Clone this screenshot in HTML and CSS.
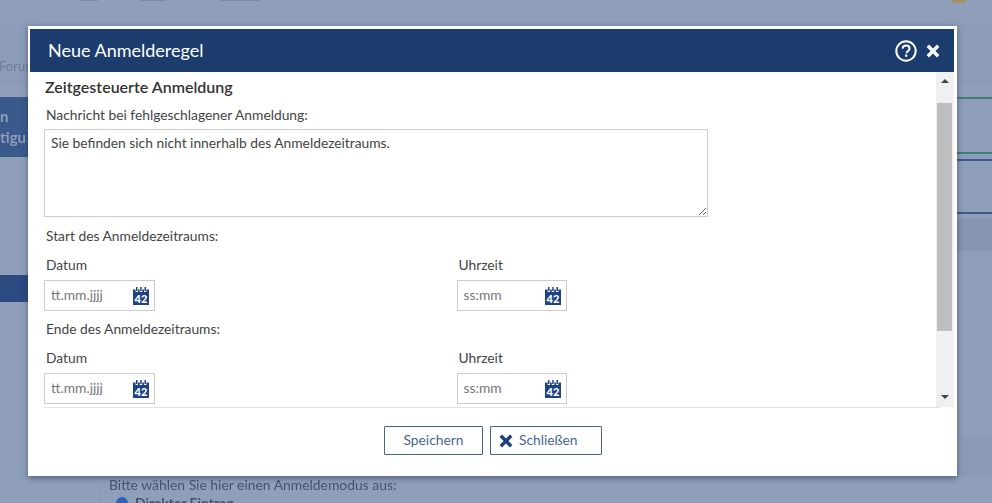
FILE: index.html
```html
<!DOCTYPE html>
<html lang="de">
<head>
<meta charset="utf-8">
<title>Neue Anmelderegel</title>
<link rel="stylesheet" href="styles.css">
</head>
<body>
<div class="page">
  <div class="top"><span class="mark"></span><span class="mark wide"></span><span class="mark short"></span><span class="gold"></span></div>
  <div class="nav"><span class="forum">Forum</span></div>
  <div class="main">
    <div class="side">
      <div class="block"><span>n</span><span>tigu</span></div>
      <div class="block small"></div>
    </div>
    <div class="content">
      <div class="lines">
        <div class="line green"></div>
        <div class="line green g2"></div>
        <div class="line blue b1"></div>
        <div class="line blue b2"></div>
        <div class="band"></div>
      </div>
      <div class="lower">
        <div class="lowerband"></div>
        <p class="mode">Bitte wählen Sie hier einen Anmeldemodus aus:</p>
        <p class="radio"><span class="dot"></span>Direkter Eintrag</p>
      </div>
    </div>
  </div>
</div>

<div class="modal">
  <header class="head">
    <h1>Neue Anmelderegel</h1>
    <div class="head-icons">
      <svg class="help" width="22" height="22" viewBox="0 0 22 22" aria-hidden="true"><circle cx="11" cy="11" r="9.700" fill="none" stroke="#fff" stroke-width="2"/><path d="M7.600 8.600c.2-2 1.600-3 3.500-3 2 0 3.400 1.200 3.400 2.900 0 1.400-.8 2.100-1.800 2.800-.8.500-1.100.9-1.100 1.900" fill="none" stroke="#fff" stroke-width="2"/><rect x="10.100" y="14.500" width="2.200" height="2.300" fill="#fff"/></svg>
      <svg width="14" height="14" viewBox="0 0 14 14" aria-hidden="true"><path d="M3 .6 7 4.600l4-4L13.400 3l-4 4 4 4-2.400 2.400-4-4-4 4L.6 11l4-4-4-4z" fill="#fff"/></svg>
    </div>
  </header>
  <div class="scrollwrap">
    <div class="body">
      <h2>Zeitgesteuerte Anmeldung</h2>
      <label class="lab msg">Nachricht bei fehlgeschlagener Anmeldung:</label>
      <textarea class="area">Sie befinden sich nicht innerhalb des Anmeldezeitraums.</textarea>
      <p class="lab sect first">Start des Anmeldezeitraums:</p>
      <div class="row">
        <div class="col">
          <label class="lab">Datum</label>
          <div class="field"><input placeholder="tt.mm.jjjj">
            <svg class="cal" width="16" height="18" viewBox="0 0 16 18" aria-hidden="true"><path d="M0 2.500h2.600v2.500h2.400V2.500h1.700v2.500h2.600V2.500h1.700v2.500h2.400V2.500H16V18H0z" fill="#1f4285"/><path d="M3 0h1.500v4H3zM7.200 0h1.500v4H7.200zM11.500 0H13v4h-1.500z" fill="#1f4285"/><text x="8" y="16" class="caltext">42</text></svg>
          </div>
        </div>
        <div class="col">
          <label class="lab">Uhrzeit</label>
          <div class="field"><input placeholder="ss:mm">
            <svg class="cal" width="16" height="18" viewBox="0 0 16 18" aria-hidden="true"><path d="M0 2.500h2.600v2.500h2.400V2.500h1.700v2.500h2.600V2.500h1.700v2.500h2.400V2.500H16V18H0z" fill="#1f4285"/><path d="M3 0h1.500v4H3zM7.200 0h1.500v4H7.200zM11.500 0H13v4h-1.500z" fill="#1f4285"/><text x="8" y="16" class="caltext">42</text></svg>
          </div>
        </div>
      </div>
      <p class="lab sect">Ende des Anmeldezeitraums:</p>
      <div class="row">
        <div class="col">
          <label class="lab">Datum</label>
          <div class="field"><input placeholder="tt.mm.jjjj">
            <svg class="cal" width="16" height="18" viewBox="0 0 16 18" aria-hidden="true"><path d="M0 2.500h2.600v2.500h2.400V2.500h1.700v2.500h2.600V2.500h1.700v2.500h2.400V2.500H16V18H0z" fill="#1f4285"/><path d="M3 0h1.500v4H3zM7.200 0h1.500v4H7.200zM11.500 0H13v4h-1.500z" fill="#1f4285"/><text x="8" y="16" class="caltext">42</text></svg>
          </div>
        </div>
        <div class="col">
          <label class="lab">Uhrzeit</label>
          <div class="field"><input placeholder="ss:mm">
            <svg class="cal" width="16" height="18" viewBox="0 0 16 18" aria-hidden="true"><path d="M0 2.500h2.600v2.500h2.400V2.500h1.700v2.500h2.600V2.500h1.700v2.500h2.400V2.500H16V18H0z" fill="#1f4285"/><path d="M3 0h1.500v4H3zM7.200 0h1.500v4H7.200zM11.500 0H13v4h-1.500z" fill="#1f4285"/><text x="8" y="16" class="caltext">42</text></svg>
          </div>
        </div>
      </div>
    </div>
    <div class="bar">
      <span class="arrow up"></span>
      <div class="thumb"></div>
      <span class="arrow down"></span>
    </div>
  </div>
  <footer class="foot">
    <div class="rule"></div>
    <div class="buttons">
      <button class="btn save">Speichern</button>
      <button class="btn close"><svg width="14" height="14" viewBox="0 0 14 14" aria-hidden="true"><path d="M3 .6 7 4.600l4-4L13.400 3l-4 4 4 4-2.400 2.400-4-4-4 4L.6 11l4-4-4-4z" fill="#1f4077"/></svg>Schließen</button>
    </div>
  </footer>
</div>
</body>
</html>
```
FILE: styles.css
```css
* { box-sizing: border-box; }
html, body { margin: 0; padding: 0; height: 503px; overflow: hidden; }
body { font-family: Lato, "Open Sans", sans-serif; background: #8f9fba; color: #333; position: relative; }

.page { width: 992px; height: 503px; display: flex; flex-direction: column; overflow: hidden; filter: blur(.7px); }
.top { height: 23px; flex: none; display: flex; gap: 42px; padding-left: 80px; background: #8f9fba; }
.mark { width: 18px; height: 1px; background: #7b8ba6; }
.mark.wide { width: 25px; }
.mark.short { width: 40px; margin-left: 13px; }
.gold { width: 14px; height: 3px; margin-left: 650px; background: #a5926a; }
.nav { height: 61px; flex: none; padding-top: 34px; background: #8d9db9; border-bottom: 1px solid #8897b2; line-height: 16px; }
.forum { font-size: 13px; color: #6f7d96; margin-left: -1px; }
.main { flex: 1; min-height: 0; display: flex; }
.side { width: 100px; padding-top: 13px; flex: none; border-right: 1px solid #8a9ab5; display: flex; flex-direction: column; }
.block { height: 60px; flex: none; background: #3a5a8c; color: #8f9fba; font-size: 15px; line-height: 21px; padding-top: 9px; font-weight: 700; display: flex; flex-direction: column; }
.block.small { height: 27px; margin-top: 118px; padding-top: 0; background: #2b4a80; }
.content { flex: 1; display: flex; flex-direction: column; }
.lines { height: 351px; flex: none; padding-top: 13px; display: flex; flex-direction: column; }
.line { height: 2px; flex: none; }
.green { background: #3f7f76; }
.blue { background: #3e5a90; }
.g2 { margin-top: 53px; }
.b1 { margin-top: 5px; }
.b2 { margin-top: 51px; }
.band { height: 32px; flex: none; margin-top: 5px; background: #8595b2; }
.lower { flex: 1; }
.lowerband { height: 41px; background: #8b9bb7; }
.mode { margin: 0 0 0 9px; font-size: 13.9px; line-height: 17px; color: #45536e; white-space: nowrap; }
.radio { margin: 1px 0 0 9px; font-size: 13.9px; line-height: 17px; color: #45536e; font-weight: 700; display: flex; align-items: center; gap: 7px; }
.dot { width: 12px; height: 12px; border-radius: 50%; background: #2e62b5; margin-left: 7px; }

.modal {
  position: absolute; left: 28px; top: 26px; width: 929px; height: 450px;
  background: #fff; padding: 3px 3px 0 2px; display: flex; flex-direction: column;
  box-shadow: 0 2px 6px rgba(30, 40, 70, .55);
}
.head { height: 43px; flex: none; background: #1c3c6e; color: #fff; display: flex; align-items: center; justify-content: space-between; padding: 0 14px 0 19px; }
.head h1 { margin: 0 0 2px -1px; font-size: 18px; font-weight: 400; color: #fff; }
.head-icons { display: flex; align-items: center; gap: 9px; }
.scrollwrap { height: 335px; flex: none; display: flex; overflow: hidden; }
.body { flex: 1; min-width: 0; padding: 5px 0 0 14px; overflow: hidden; }
.body h2 { margin: 0 0 0 1px; font-size: 16px; line-height: 20px; font-weight: 600; color: #333; }
.lab { display: block; margin: 0; font-size: 13.8px; line-height: 18px; color: #444; padding-left: 2px; }
.msg { margin-top: 9px; margin-bottom: 5px; }
.area {
  display: block; width: 664px; height: 88px; padding: 4px 6px; margin: 0;
  border: 1px solid #ccc; font: 13.8px/18px Lato, sans-serif; color: #444; resize: both; background: #fff;
}
.sect.first { margin-top: 10px; }
.sect { margin-top: 9px; }
.row { display: flex; margin-top: 11px; }
.col { width: 412.5px; flex: none; }
.col .lab { margin-bottom: 6px; }
.field { width: 111px; height: 31px; border: 1px solid #ccc; display: flex; align-items: center; background: #fff; }
.col + .col .field { width: 110px; }
.field input { flex: 1; width: 70px; min-width: 0; border: 0; outline: 0; padding: 0 0 3px 6px; font: 13.8px Lato, sans-serif; color: #444; background: transparent; }
.field input::placeholder { color: #777; opacity: 1; }
.cal { flex: none; margin-right: 5px; margin-left: 5px; }
.caltext { font: 900 11px Lato, sans-serif; fill: #fff; text-anchor: middle; }
.bar { width: 18px; flex: none; background: #f0f0f0; display: flex; flex-direction: column; align-items: center; padding-top: 7px; }
.arrow { width: 0; height: 0; border-left: 4px solid transparent; border-right: 4px solid transparent; }
.arrow.up { border-bottom: 4px solid #444; }
.arrow.down { border-top: 4px solid #444; margin-top: 64px; }
.thumb { width: 15px; height: 228px; background: #bebebe; margin-top: 20px; margin-left: -2px; }
.foot { flex: 1; display: flex; flex-direction: column; }
.rule { height: 1px; background: #e0e0e8; margin: 0 13px 0 14px; flex: none; }
.buttons { display: flex; justify-content: center; gap: 7px; padding-top: 18px; padding-left: 2px; }
.btn { height: 29px; background: #fff; border: 1px solid #45658f; border-radius: 1px; font: 13.8px Lato, sans-serif; color: #4a6690; display: flex; align-items: center; justify-content: center; gap: 6px; padding: 0 0 2px; }
.save { width: 99px; }
.close { width: 112px; justify-content: flex-start; padding-left: 8px; }
.close svg { margin-top: 2px; }
```
